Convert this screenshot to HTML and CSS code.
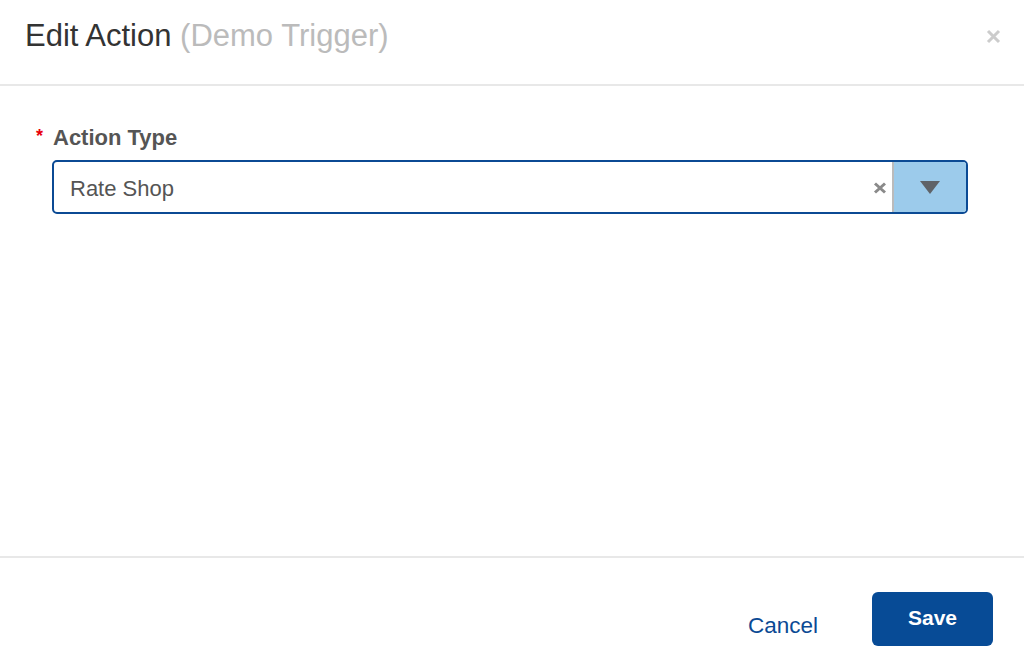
FILE: index.html
```html
<!DOCTYPE html>
<html>
<head>
<meta charset="utf-8">
<link rel="stylesheet" href="styles.css">
</head>
<body>
<div class="modal">
  <header class="modal-header">
    <h1 class="title">Edit Action <span class="sub">(Demo Trigger)</span></h1>
    <button class="close" aria-label="Close">
      <svg width="15" height="15" viewBox="0 0 15 15"><path d="M2 2 L13 13 M13 2 L2 13" stroke="#cccccc" stroke-width="3" stroke-linecap="butt"/></svg>
    </button>
  </header>
  <main class="modal-body">
    <div class="field">
      <label class="label"><span class="req">*</span>Action Type</label>
      <div class="select">
        <span class="value">Rate Shop</span>
        <span class="clear">
          <svg width="14" height="12" viewBox="0 0 14 12"><path d="M2 1.5 L12 10.5 M12 1.5 L2 10.5" stroke="#8a8a8a" stroke-width="3"/></svg>
        </span>
        <span class="arrow">
          <svg width="20" height="13" viewBox="0 0 20 13"><path d="M0 0 H20 L10 13 Z" fill="#5f6368"/></svg>
        </span>
      </div>
    </div>
  </main>
  <footer class="modal-footer">
    <button class="btn-link">Cancel</button>
    <button class="btn-primary">Save</button>
  </footer>
</div>
</body>
</html>
```

FILE: styles.css
```css
html, body {
  margin: 0;
  padding: 0;
  background: #ffffff;
  font-family: "Liberation Sans", Arial, Helvetica, sans-serif;
}

.modal {
  width: 1024px;
  height: 672px;
  display: flex;
  flex-direction: column;
  box-sizing: border-box;
}

.modal-header {
  flex: none;
  display: flex;
  align-items: center;
  justify-content: space-between;
  padding: 0 22px 12px 25px;
  box-sizing: border-box;
  border-bottom: 2px solid #e8e8e8;
  height: 86px;
}

.title {
  margin: 0;
  font-size: 31px;
  font-weight: normal;
  color: #333333;
  letter-spacing: 0;
}

.sub {
  color: #bbbbbb;
}

.close {
  border: 0;
  background: none;
  padding: 0;
  width: 17px;
  height: 17px;
  display: flex;
  align-items: center;
  justify-content: center;
  cursor: pointer;
}

.modal-body {
  flex: 1;
  padding: 40px 56px 0 36px;
}

.field {
  display: flex;
  flex-direction: column;
}

.label {
  font-size: 22px;
  font-weight: bold;
  color: #555555;
  line-height: 24px;
  display: flex;
  align-items: flex-start;
}

.req {
  color: #e8000b;
  font-size: 18px;
  width: 17px;
  line-height: 20px;
}

.select {
  margin: 10px 0 0 16px;
  height: 54px;
  box-sizing: border-box;
  border: 2px solid #0b4a94;
  border-radius: 5px;
  display: flex;
  align-items: stretch;
  overflow: hidden;
}

.value {
  flex: 1;
  display: flex;
  align-items: center;
  padding: 3px 0 0 16px;
  font-size: 22px;
  color: #555555;
}

.clear {
  display: flex;
  align-items: center;
  padding: 1px 5px 0 0;
}

.arrow {
  width: 72px;
  background: #9ccbeb;
  border-left: 2px solid #bbbbbb;
  display: flex;
  align-items: center;
  justify-content: center;
}

.modal-footer {
  flex: none;
  height: 116px;
  box-sizing: border-box;
  border-top: 2px solid #e8e8e8;
  display: flex;
  justify-content: flex-end;
  align-items: flex-start;
  padding: 34px 31px 0 0;
  gap: 54px;
}

.btn-link {
  border: 0;
  background: none;
  font-family: inherit;
  font-size: 22.5px;
  color: #0b4a94;
  padding: 0;
  margin-top: 21px;
  cursor: pointer;
}

.btn-primary {
  width: 121px;
  height: 54px;
  border: 0;
  border-radius: 6px;
  background: #074b96;
  color: #ffffff;
  font-family: inherit;
  font-size: 21px;
  font-weight: bold;
  padding: 0 0 2px;
  cursor: pointer;
}
```
